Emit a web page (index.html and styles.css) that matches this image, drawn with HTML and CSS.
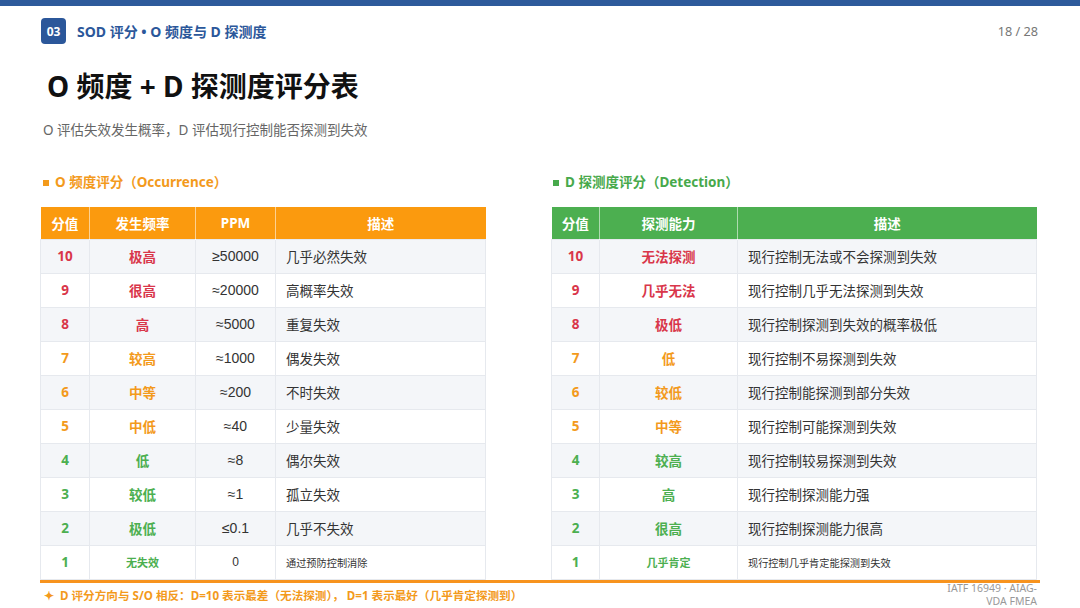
FILE: index.html
```html
<!DOCTYPE html>
<html lang="zh-CN">
<head>
<meta charset="utf-8">
<title>O 频度 + D 探测度评分表</title>
<link rel="stylesheet" href="styles.css">
</head>
<body>
<div class="topbar"></div>
<div class="page">
  <header class="header">
    <div class="crumb">
      <span class="badge">03</span>
      <span class="crumb-text">SOD 评分 • O 频度与 D 探测度</span>
    </div>
    <span class="pager">18 / 28</span>
  </header>

  <h1 class="title">O 频度 + D 探测度评分表</h1>
  <p class="subtitle">O 评估失效发生概率，D 评估现行控制能否探测到失效</p>

  <div class="tables">
    <section class="block">
      <h2 class="sec sec-o"><span class="sq"></span>O 频度评分（Occurrence）</h2>
      <table class="grid grid-o">
        <colgroup><col class="c-score"><col class="c-o2"><col class="c-o3"><col></colgroup>
        <thead>
          <tr><th>分值</th><th>发生频率</th><th>PPM</th><th>描述</th></tr>
        </thead>
        <tbody>
          <tr><td class="n red">10</td><td class="lv red">极高</td><td class="mid">≥50000</td><td class="desc">几乎必然失效</td></tr>
          <tr><td class="n red">9</td><td class="lv red">很高</td><td class="mid">≈20000</td><td class="desc">高概率失效</td></tr>
          <tr><td class="n red">8</td><td class="lv red">高</td><td class="mid">≈5000</td><td class="desc">重复失效</td></tr>
          <tr><td class="n org">7</td><td class="lv org">较高</td><td class="mid">≈1000</td><td class="desc">偶发失效</td></tr>
          <tr><td class="n org">6</td><td class="lv org">中等</td><td class="mid">≈200</td><td class="desc">不时失效</td></tr>
          <tr><td class="n org">5</td><td class="lv org">中低</td><td class="mid">≈40</td><td class="desc">少量失效</td></tr>
          <tr><td class="n grn">4</td><td class="lv grn">低</td><td class="mid">≈8</td><td class="desc">偶尔失效</td></tr>
          <tr><td class="n grn">3</td><td class="lv grn">较低</td><td class="mid">≈1</td><td class="desc">孤立失效</td></tr>
          <tr><td class="n grn">2</td><td class="lv grn">极低</td><td class="mid">≤0.1</td><td class="desc">几乎不失效</td></tr>
          <tr class="small"><td class="n grn">1</td><td class="lv grn">无失效</td><td class="mid">0</td><td class="desc">通过预防控制消除</td></tr>
        </tbody>
      </table>
    </section>

    <section class="block">
      <h2 class="sec sec-d"><span class="sq"></span>D 探测度评分（Detection）</h2>
      <table class="grid grid-d">
        <colgroup><col class="c-score"><col class="c-d2"><col></colgroup>
        <thead>
          <tr><th>分值</th><th>探测能力</th><th>描述</th></tr>
        </thead>
        <tbody>
          <tr><td class="n red">10</td><td class="lv red">无法探测</td><td class="desc">现行控制无法或不会探测到失效</td></tr>
          <tr><td class="n red">9</td><td class="lv red">几乎无法</td><td class="desc">现行控制几乎无法探测到失效</td></tr>
          <tr><td class="n red">8</td><td class="lv red">极低</td><td class="desc">现行控制探测到失效的概率极低</td></tr>
          <tr><td class="n org">7</td><td class="lv org">低</td><td class="desc">现行控制不易探测到失效</td></tr>
          <tr><td class="n org">6</td><td class="lv org">较低</td><td class="desc">现行控制能探测到部分失效</td></tr>
          <tr><td class="n org">5</td><td class="lv org">中等</td><td class="desc">现行控制可能探测到失效</td></tr>
          <tr><td class="n grn">4</td><td class="lv grn">较高</td><td class="desc">现行控制较易探测到失效</td></tr>
          <tr><td class="n grn">3</td><td class="lv grn">高</td><td class="desc">现行控制探测能力强</td></tr>
          <tr><td class="n grn">2</td><td class="lv grn">很高</td><td class="desc">现行控制探测能力很高</td></tr>
          <tr class="small"><td class="n grn">1</td><td class="lv grn">几乎肯定</td><td class="desc">现行控制几乎肯定能探测到失效</td></tr>
        </tbody>
      </table>
    </section>
  </div>

  <footer class="footer">
    <p class="note">✦&nbsp; D 评分方向与 S/O 相反：D=10 表示最差（无法探测），&nbsp;D=1 表示最好（几乎肯定探测到）</p>
    <p class="source">IATF 16949 · AIAG-VDA FMEA</p>
  </footer>
</div>
</body>
</html>
```

FILE: styles.css
```css
* { box-sizing: border-box; }

html, body {
  margin: 0;
  padding: 0;
  width: 1080px;
  height: 608px;
  overflow: hidden;
  background: #ffffff;
  font-family: "Noto Sans", "Noto Sans CJK SC", sans-serif;
  color: #333333;
}

.topbar {
  height: 6px;
  background: #2d5a9b;
}

.page {
  padding: 0 40px;
}

.header {
  margin-top: 12px;
  height: 26px;
  display: flex;
  align-items: center;
  justify-content: space-between;
}

.crumb {
  display: flex;
  align-items: center;
  gap: 11px;
  padding-left: 1px;
}

.badge {
  width: 25px;
  height: 26px;
  border-radius: 4px;
  background: #2b579a;
  color: #ffffff;
  font-size: 12px;
  font-weight: 700;
  display: flex;
  align-items: center;
  justify-content: center;
}

.crumb-text {
  color: #2b579a;
  font-size: 14px;
  font-weight: 700;
}

.pager {
  color: #777777;
  font-size: 12.7px;
  margin-right: 2px;
}

.title {
  margin: 24px 0 0 7px;
  font-size: 28px;
  line-height: 36px;
  font-weight: 700;
  color: #111111;
}

.subtitle {
  margin: 16px 0 0 3px;
  font-size: 13.5px;
  line-height: 20px;
  color: #666666;
}

.tables {
  margin-top: 32px;
  display: grid;
  grid-template-columns: 446px 486px;
  column-gap: 65px;
}

.sec {
  margin: 0 0 15px 3px;
  font-size: 13.5px;
  line-height: 20px;
  font-weight: 700;
  display: flex;
  align-items: center;
}

.sq {
  width: 6px;
  height: 6px;
  margin-right: 6px;
  margin-top: 2px;
}

.sec-o { color: #f39a1c; }
.sec-o .sq { background: #f39a1c; }
.sec-d { color: #47a94b; margin-left: 2px; }
.sec-d .sq { background: #47a94b; }

.grid {
  width: 100%;
  border-collapse: collapse;
  table-layout: fixed;
}

.c-score { width: 49px; }
.c-o2 { width: 106px; }
.c-o3 { width: 80px; }
.grid-d .c-score { width: 48px; }
.c-d2 { width: 138px; }

.grid th {
  height: 32px;
  padding: 0;
  color: #ffffff;
  font-size: 13.5px;
  font-weight: 700;
  text-align: center;
  border-left: 1px solid rgba(255, 255, 255, 0.55);
}

.grid th:first-child { border-left: none; }

.grid-o th { background: #fb9a0e; }
.grid-d th { background: #4caf50; }

.grid td {
  height: 34px;
  padding: 0;
  font-size: 13.5px;
  border: 1px solid #e6e9ee;
  text-align: center;
  color: #333333;
}

.grid tbody tr:nth-child(odd) td { background: #f4f6f9; }
.grid tbody tr:nth-child(even) td { background: #ffffff; }

.grid td.n,
.grid td.lv { font-weight: 700; }

.grid td.mid {
  font-family: "Liberation Sans", "Noto Sans", sans-serif;
  font-size: 14px;
}

.grid td.desc {
  text-align: left;
  padding-left: 10px;
}

.grid td.red { color: #d9364a; }
.grid td.org { color: #f39a1c; }
.grid td.grn { color: #4caf50; }

.grid tr.small td.lv { font-size: 11px; }
.grid tr.small td.mid { font-size: 12px; }
.grid tr.small td.desc { font-size: 10.2px; }

.footer {
  border-top: 3px solid #f7931e;
  display: flex;
  justify-content: space-between;
  align-items: flex-start;
}

.note {
  margin: 5px 0 0 4px;
  font-size: 11.6px;
  line-height: 16px;
  font-weight: 700;
  color: #f39a1c;
}

.source {
  margin: -1px 3px 0 0;
  width: 96px;
  text-align: right;
  font-size: 10.5px;
  line-height: 13.5px;
  color: #999999;
}
```
